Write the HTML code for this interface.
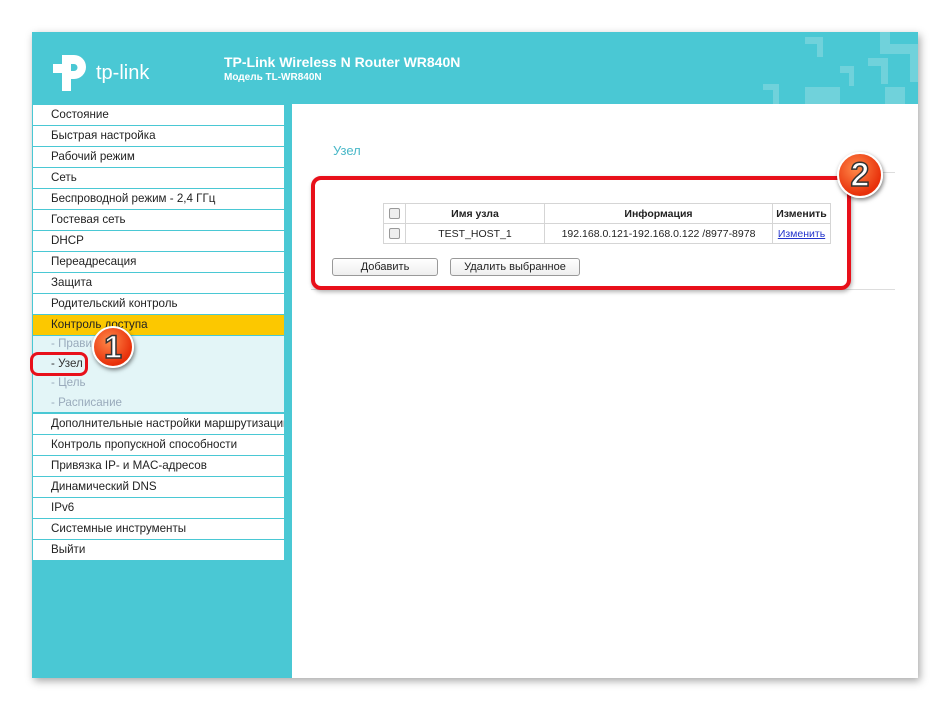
<!DOCTYPE html>
<html><head><meta charset="utf-8"><style>
*{margin:0;padding:0;box-sizing:border-box}
body{width:950px;height:710px;background:#fff;font-family:"Liberation Sans",Arial,sans-serif;position:relative;overflow:hidden}
.frame{position:absolute;left:32px;top:32px;width:886px;height:646px;background:#4ac8d4;box-shadow:2px 3px 8px rgba(0,0,0,.35)}
.content{position:absolute;left:292px;top:104px;width:626px;height:574px;background:#fff}
.mi{position:absolute;left:33px;width:251px;height:20px;background:#fff;font-size:11.6px;color:#222;padding-left:18px;line-height:20px;white-space:nowrap;overflow:hidden}
.sub{position:absolute;left:33px;top:336px;width:251px;height:76px;background:#e3f5f7}
.si{position:absolute;left:51px;font-size:11.6px;color:#9ab;line-height:14px}
.ttl{position:absolute;color:#fff;font-weight:bold}
table{border-collapse:collapse;position:absolute;left:383px;top:203px;font-size:10.5px;color:#222}
td{border:1px solid #d5d5d5;height:20px;text-align:center}
.cb{display:inline-block;width:11px;height:11px;border:1px solid #999;border-radius:2px;background:#eee;vertical-align:middle}
.btn{position:absolute;top:258px;height:18px;border:1px solid #999;border-radius:3px;background:linear-gradient(#fff,#eee);font-size:11px;text-align:center;line-height:16px;color:#222}
.badge{position:absolute;border-radius:50%;background:radial-gradient(circle at 40% 35%,#ff8a4a,#e8300a 70%);border:2px solid #fff;box-shadow:1px 2px 4px rgba(0,0,0,.5);color:#fff;font-weight:bold;text-align:center;-webkit-text-stroke:1.5px #333;font-family:"Liberation Sans",sans-serif}
</style></head><body>
<div class="frame"></div>
<svg style="position:absolute;left:700px;top:32px" width="218" height="72"><g fill="#70d2db"><path d="M105 5h18v20h-6v-13h-12z"/><path d="M180 0h10v12h28v38h-8v-28h-30z"/><path d="M140 34h14v20h-5v-13h-9z"/><path d="M168 26h20v26h-7v-18h-13z"/><path d="M105 55h35v17h-35z"/><path d="M63 52h16v20h-6v-14h-10z"/><path d="M185 55h20v17h-20z"/></g></svg>
<svg style="position:absolute;left:52px;top:52px" width="42" height="42" viewBox="0 0 42 42"><path d="M10 3h12a12 12 0 0 1 0 24h-3v12h-9z M19 12v7h3a3.5 3.5 0 0 0 0-7z" fill="#fff" fill-rule="evenodd"/><rect x="1" y="12" width="9" height="9" fill="#fff"/></svg>
<div class="ttl" style="left:96px;top:62px;font-size:20px;font-weight:normal">tp-link</div>
<div class="ttl" style="left:224px;top:54px;font-size:14px">TP-Link Wireless N Router WR840N</div>
<div class="ttl" style="left:224px;top:72px;font-size:10px">Модель TL-WR840N</div>
<div class="content"></div>
<div class="mi" style="top:105px">Состояние</div>
<div class="mi" style="top:126px">Быстрая настройка</div>
<div class="mi" style="top:147px">Рабочий режим</div>
<div class="mi" style="top:168px">Сеть</div>
<div class="mi" style="top:189px">Беспроводной режим - 2,4 ГГц</div>
<div class="mi" style="top:210px">Гостевая сеть</div>
<div class="mi" style="top:231px">DHCP</div>
<div class="mi" style="top:252px">Переадресация</div>
<div class="mi" style="top:273px">Защита</div>
<div class="mi" style="top:294px">Родительский контроль</div>
<div class="mi" style="top:315px;background:#fcc800">Контроль доступа</div>
<div class="sub"></div>
<div class="si" style="top:337px">- Правило</div>
<div class="si" style="top:357px;color:#333">- Узел</div>
<div class="si" style="top:376px">- Цель</div>
<div class="si" style="top:396px">- Расписание</div>
<div class="mi" style="top:414px">Дополнительные настройки маршрутизации</div>
<div class="mi" style="top:435px">Контроль пропускной способности</div>
<div class="mi" style="top:456px">Привязка IP- и MAC-адресов</div>
<div class="mi" style="top:477px">Динамический DNS</div>
<div class="mi" style="top:498px">IPv6</div>
<div class="mi" style="top:519px">Системные инструменты</div>
<div class="mi" style="top:540px">Выйти</div>
<div style="position:absolute;left:30px;top:352px;width:58px;height:24px;border:3px solid #e8101a;border-radius:8px"></div>
<div class="badge" style="left:92px;top:326px;width:42px;height:42px;font-size:32px;line-height:38px">1</div>
<div style="position:absolute;left:333px;top:143px;font-size:13px;color:#4ab8c8">Узел</div>
<div style="position:absolute;left:850px;top:172px;width:45px;height:1px;background:#ddd"></div>
<div style="position:absolute;left:311px;top:289px;width:584px;height:1px;background:#ddd"></div>
<table>
<tr><td style="width:22px"><span class="cb"></span></td><td style="width:139px;font-weight:bold">Имя узла</td><td style="width:228px;font-weight:bold">Информация</td><td style="width:58px;font-weight:bold">Изменить</td></tr>
<tr><td><span class="cb"></span></td><td>TEST_HOST_1</td><td>192.168.0.121-192.168.0.122 /8977-8978</td><td><span style="color:#2233cc;text-decoration:underline">Изменить</span></td></tr>
</table>
<div class="btn" style="left:332px;width:106px">Добавить</div>
<div class="btn" style="left:450px;width:130px">Удалить выбранное</div>
<div style="position:absolute;left:311px;top:176px;width:540px;height:114px;border:4px solid #e8101a;border-radius:10px;box-shadow:1px 2px 4px rgba(0,0,0,.3)"></div>
<div class="badge" style="left:837px;top:152px;width:46px;height:46px;font-size:34px;line-height:42px">2</div>
</body></html>
